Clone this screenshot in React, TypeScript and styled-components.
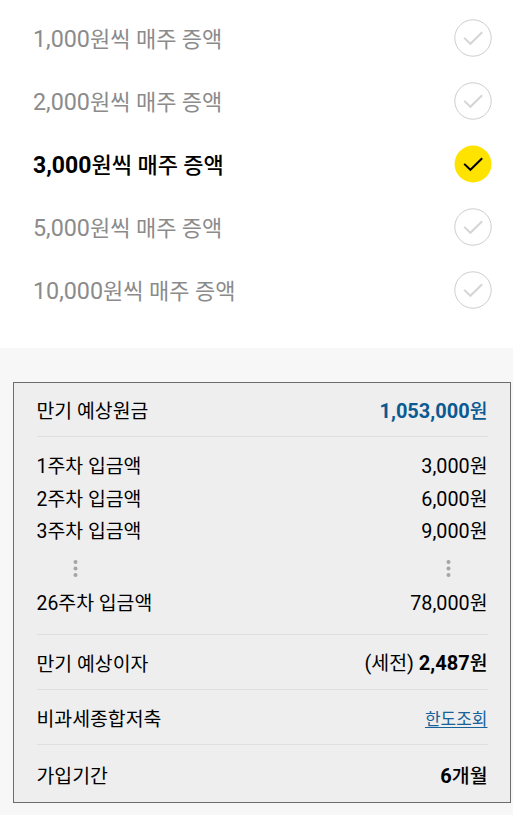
import React from "react";
import styled, { createGlobalStyle } from "styled-components";

const GlobalStyle = createGlobalStyle`
  * { box-sizing: border-box; }
  body {
    margin: 0;
    background: #f7f7f7;
    color: #000;
    font-family: Roboto, "Noto Sans CJK KR", sans-serif;
  }
`;

const Page = styled.main`
  width: 513px;
  height: 815px;
  overflow: hidden;
  background: #f7f7f7;
`;

const OptionList = styled.section`
  height: 348px;
  padding: 6px 21px 0 33px;
  background: #fff;
`;

/* Digits are set slightly larger than the Hangul beside them. */
const Num = styled.span`
  font-size: 1.02em;
`;

const OptionLabel = styled.span`
  padding-top: 4px;
`;

const Option = styled.div<{ $selected: boolean }>`
  display: flex;
  align-items: center;
  justify-content: space-between;
  height: 63px;
  font-size: 22px;
  line-height: 32px;
  color: ${(p) => (p.$selected ? "#000" : "#8b8b8b")};
  font-weight: ${(p) => (p.$selected ? 500 : 400)};

  ${Num} {
    font-size: ${(p) => (p.$selected ? 23 : 23.3)}px;
    font-weight: ${(p) => (p.$selected ? 700 : 400)};
  }
`;

const CheckIcon = styled.svg`
  display: block;
  width: 38px;
  height: 38px;
`;

const Summary = styled.section`
  width: 498px;
  height: 421px;
  margin: 34px 0 0 13px;
  padding: 0 22.5px 0 22.5px;
  border: 1px solid #6c6c6c;
  background: #eee;
  font-size: 19.4px;
`;

const Group = styled.div<{ $height: number; $top: number }>`
  height: ${(p) => p.$height}px;
  padding-top: ${(p) => p.$top}px;
  & + & { border-top: 1px solid #dfdfdf; }
`;

const Row = styled.div`
  display: flex;
  align-items: center;
  justify-content: space-between;
  height: 32.5px;
  line-height: 28px;
`;

const Value = styled.span`
  padding-bottom: 2px;
`;

const Strong = styled.strong<{ $accent?: boolean }>`
  font-weight: 500;
  color: ${(p) => (p.$accent ? "#0b5a91" : "inherit")};

  ${Num} {
    font-size: 20px;
    font-weight: 700;
  }
`;

const LimitLink = styled.a`
  padding-bottom: 2px;
  font-size: 17px;
  color: #176399;
  text-decoration: underline;
  text-decoration-thickness: 1px;
  text-underline-offset: 2px;
`;

const DotRow = styled.div`
  display: flex;
  justify-content: space-between;
  align-items: center;
  height: 39px;
  padding: 0 37px 0 36.5px;
`;

const Dots = styled.svg`
  display: block;
  width: 5px;
  height: 19px;
  fill: #a5a5a5;
`;

const options = ["1,000", "2,000", "3,000", "5,000", "10,000"];
const SELECTED = "3,000";

function Check({ selected }: { selected: boolean }) {
  return (
    <CheckIcon viewBox="0 0 38 38" fill="none">
      <circle
        cx="19"
        cy="19"
        r={selected ? 18.5 : 18.2}
        fill={selected ? "#ffe300" : "#fff"}
        stroke={selected ? "none" : "#cecece"}
      />
      <path d="M10.2 18.9 L16.4 24.8 L28.2 13.2" stroke={selected ? "#000" : "#d5d5d5"} strokeWidth="2" />
    </CheckIcon>
  );
}

function Ellipsis() {
  return (
    <Dots viewBox="0 0 5 19">
      <circle cx="2.5" cy="3" r="2" />
      <circle cx="2.5" cy="9.5" r="2" />
      <circle cx="2.5" cy="16" r="2" />
    </Dots>
  );
}

export default function App() {
  return (
    <Page>
      <GlobalStyle />
      <OptionList>
        {options.map((amount) => (
          <Option key={amount} $selected={amount === SELECTED}>
            <OptionLabel><Num>{amount}</Num>원씩 매주 증액</OptionLabel>
            <Check selected={amount === SELECTED} />
          </Option>
        ))}
      </OptionList>
      <Summary>
        <Group $height={53} $top={13}>
          <Row><span>만기 예상원금</span><Value><Strong $accent><Num>1,053,000</Num>원</Strong></Value></Row>
        </Group>
        <Group $height={198} $top={14}>
          <Row><span>1주차 입금액</span><span><Num>3,000</Num>원</span></Row>
          <Row><span>2주차 입금액</span><span><Num>6,000</Num>원</span></Row>
          <Row><span>3주차 입금액</span><span><Num>9,000</Num>원</span></Row>
          <DotRow><Ellipsis /><Ellipsis /></DotRow>
          <Row><span>26주차 입금액</span><span><Num>78,000</Num>원</span></Row>
        </Group>
        <Group $height={55} $top={13.5}>
          <Row><span>만기 예상이자</span><Value><Num>(</Num>세전<Num>) </Num><Strong><Num>2,487</Num>원</Strong></Value></Row>
        </Group>
        <Group $height={55} $top={13.5}>
          <Row><span>비과세종합저축</span><LimitLink href="#">한도조회</LimitLink></Row>
        </Group>
        <Group $height={58} $top={16}>
          <Row><span>가입기간</span><Value><Strong><Num>6</Num>개월</Strong></Value></Row>
        </Group>
      </Summary>
    </Page>
  );
}
